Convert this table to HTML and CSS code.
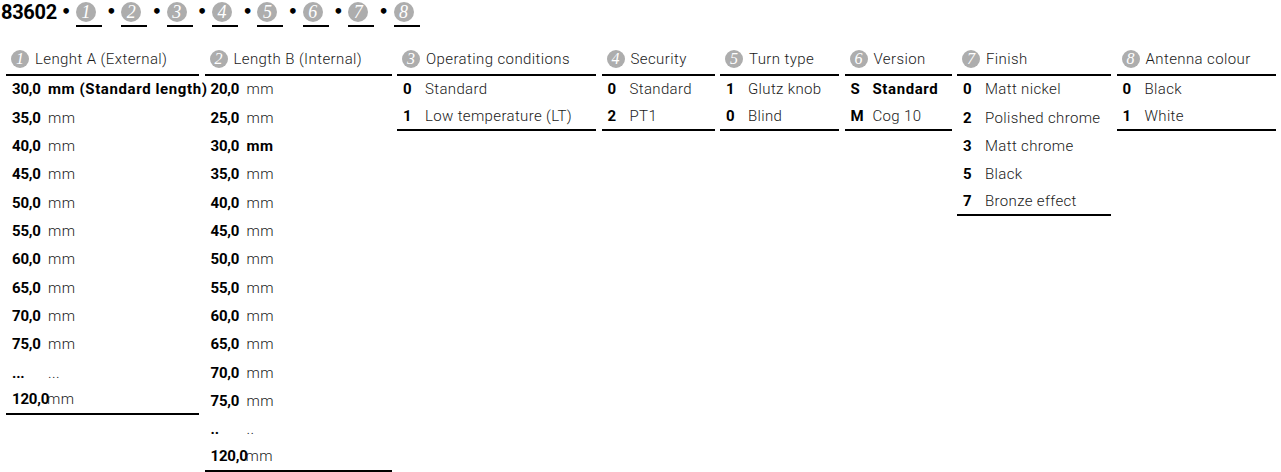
FILE: index.html
```html
<!DOCTYPE html>
<html>
<head>
<meta charset="utf-8">
<link rel="stylesheet" href="styles.css">
</head>
<body>
<div class="code-line">
  <span class="article">83602</span>
  <span class="dot">•</span><span class="slot"><span class="num">1</span></span>
  <span class="dot">•</span><span class="slot"><span class="num">2</span></span>
  <span class="dot">•</span><span class="slot"><span class="num">3</span></span>
  <span class="dot">•</span><span class="slot"><span class="num">4</span></span>
  <span class="dot">•</span><span class="slot"><span class="num">5</span></span>
  <span class="dot">•</span><span class="slot"><span class="num">6</span></span>
  <span class="dot">•</span><span class="slot"><span class="num">7</span></span>
  <span class="dot">•</span><span class="slot"><span class="num">8</span></span>
</div>

<div class="columns">
  <div class="col col-1 wide">
    <div class="head"><span class="num">1</span>Lenght A (External)</div>
    <div class="row"><span class="code">30,0</span><span class="text strong">mm (Standard length)</span></div>
    <div class="row"><span class="code">35,0</span><span class="text">mm</span></div>
    <div class="row"><span class="code">40,0</span><span class="text">mm</span></div>
    <div class="row"><span class="code">45,0</span><span class="text">mm</span></div>
    <div class="row"><span class="code">50,0</span><span class="text">mm</span></div>
    <div class="row"><span class="code">55,0</span><span class="text">mm</span></div>
    <div class="row"><span class="code">60,0</span><span class="text">mm</span></div>
    <div class="row"><span class="code">65,0</span><span class="text">mm</span></div>
    <div class="row"><span class="code">70,0</span><span class="text">mm</span></div>
    <div class="row"><span class="code">75,0</span><span class="text">mm</span></div>
    <div class="row"><span class="code">...</span><span class="text">...</span></div>
    <div class="row last"><span class="code">120,0</span><span class="text tight">mm</span></div>
  </div>

  <div class="col col-2 wide">
    <div class="head"><span class="num">2</span>Length B (Internal)</div>
    <div class="row"><span class="code">20,0</span><span class="text">mm</span></div>
    <div class="row"><span class="code">25,0</span><span class="text">mm</span></div>
    <div class="row"><span class="code">30,0</span><span class="text strong">mm</span></div>
    <div class="row"><span class="code">35,0</span><span class="text">mm</span></div>
    <div class="row"><span class="code">40,0</span><span class="text">mm</span></div>
    <div class="row"><span class="code">45,0</span><span class="text">mm</span></div>
    <div class="row"><span class="code">50,0</span><span class="text">mm</span></div>
    <div class="row"><span class="code">55,0</span><span class="text">mm</span></div>
    <div class="row"><span class="code">60,0</span><span class="text">mm</span></div>
    <div class="row"><span class="code">65,0</span><span class="text">mm</span></div>
    <div class="row"><span class="code">70,0</span><span class="text">mm</span></div>
    <div class="row"><span class="code">75,0</span><span class="text">mm</span></div>
    <div class="row"><span class="code">..</span><span class="text">..</span></div>
    <div class="row last"><span class="code">120,0</span><span class="text tight">mm</span></div>
  </div>

  <div class="col col-3">
    <div class="head"><span class="num">3</span>Operating conditions</div>
    <div class="row"><span class="code">0</span><span class="text">Standard</span></div>
    <div class="row last"><span class="code">1</span><span class="text">Low temperature (LT)</span></div>
  </div>

  <div class="col col-4">
    <div class="head"><span class="num">4</span>Security</div>
    <div class="row"><span class="code">0</span><span class="text">Standard</span></div>
    <div class="row last"><span class="code">2</span><span class="text">PT1</span></div>
  </div>

  <div class="col col-5">
    <div class="head"><span class="num">5</span>Turn type</div>
    <div class="row"><span class="code">1</span><span class="text">Glutz knob</span></div>
    <div class="row last"><span class="code">0</span><span class="text">Blind</span></div>
  </div>

  <div class="col col-6">
    <div class="head"><span class="num">6</span>Version</div>
    <div class="row"><span class="code">S</span><span class="text strong">Standard</span></div>
    <div class="row last"><span class="code">M</span><span class="text">Cog 10</span></div>
  </div>

  <div class="col col-7">
    <div class="head"><span class="num">7</span>Finish</div>
    <div class="row"><span class="code">0</span><span class="text">Matt nickel</span></div>
    <div class="row"><span class="code">2</span><span class="text">Polished chrome</span></div>
    <div class="row"><span class="code">3</span><span class="text">Matt chrome</span></div>
    <div class="row"><span class="code">5</span><span class="text">Black</span></div>
    <div class="row last"><span class="code">7</span><span class="text">Bronze effect</span></div>
  </div>

  <div class="col col-8">
    <div class="head"><span class="num">8</span>Antenna colour</div>
    <div class="row"><span class="code">0</span><span class="text">Black</span></div>
    <div class="row last"><span class="code">1</span><span class="text">White</span></div>
  </div>
</div>
</body>
</html>
```

FILE: styles.css
```css
html, body {
  margin: 0;
  padding: 0;
  background: #fff;
}

body {
  font-family: Roboto, "Liberation Sans", sans-serif;
  color: #1a1a1a;
}

/* top article code line */
.code-line {
  display: flex;
  align-items: flex-start;
  height: 30px;
  padding-left: 1px;
}

.article {
  font-weight: 700;
  font-size: 20px;
  line-height: 24px;
  color: #000;
  letter-spacing: -0.3px;
}

.dot {
  font-family: "DejaVu Sans", sans-serif;
  font-weight: 700;
  font-size: 16px;
  line-height: 24px;
  color: #000;
  width: 10px;
  margin: 0 5px 0 4px;
  text-align: center;
}

.slot {
  display: flex;
  align-items: flex-start;
  width: 26px;
  height: 26px;
  padding-top: 1px;
  box-sizing: border-box;
  border-bottom: 2px solid #000;
  margin-top: 1px;
  margin-right: 0.4px;
}

.slot .num {
  width: 20px;
  height: 20px;
  font-size: 18px;
  line-height: 20px;
  margin-right: 0;
}

/* circled numbers */
.num {
  display: inline-flex;
  align-items: center;
  justify-content: center;
  width: 18px;
  height: 18px;
  border-radius: 50%;
  background: #adadad;
  color: #fff;
  font-family: "Liberation Serif", serif;
  font-style: italic;
  font-size: 16px;
  line-height: 18px;
  margin-right: 6px;
  flex: none;
  letter-spacing: 0;
}

/* option columns */
.columns {
  display: flex;
  align-items: flex-start;
  padding-left: 6px;
  margin-top: 16px;
}

.col {
  flex: none;
  margin-right: 5.5px;
}

.col-1 { width: 193px; }
.col-2 { width: 187px; }
.col-3 { width: 199px; }
.col-4 { width: 113px; }
.col-5 { width: 119px; }
.col-6 { width: 107px; }
.col-7 { width: 154px; }
.col-8 { width: 159.5px; }

.head {
  display: flex;
  align-items: center;
  height: 26px;
  padding-left: 5px;
  padding-bottom: 2px;
  border-bottom: 2px solid #000;
  font-size: 15px;
  font-weight: 300;
  color: #1a1a1a;
  white-space: nowrap;
  letter-spacing: 0.4px;
}

.row {
  display: flex;
  align-items: center;
  box-sizing: border-box;
  height: 28.36px;
  padding-left: 6px;
  padding-bottom: 2px;
  font-size: 15px;
  white-space: nowrap;
}

.row.last {
  height: 27px;
  border-bottom: 2px solid #000;
}

.code {
  flex: none;
  width: 22px;
  font-weight: 700;
  color: #000;
  letter-spacing: -0.2px;
}

.wide .code {
  width: 36px;
}

.text {
  font-weight: 300;
  color: #1a1a1a;
  letter-spacing: 0.35px;
}

.text.strong {
  font-weight: 700;
  color: #000;
  letter-spacing: 0.6px;
}

.text.tight {
  margin-left: -1px;
}
```
